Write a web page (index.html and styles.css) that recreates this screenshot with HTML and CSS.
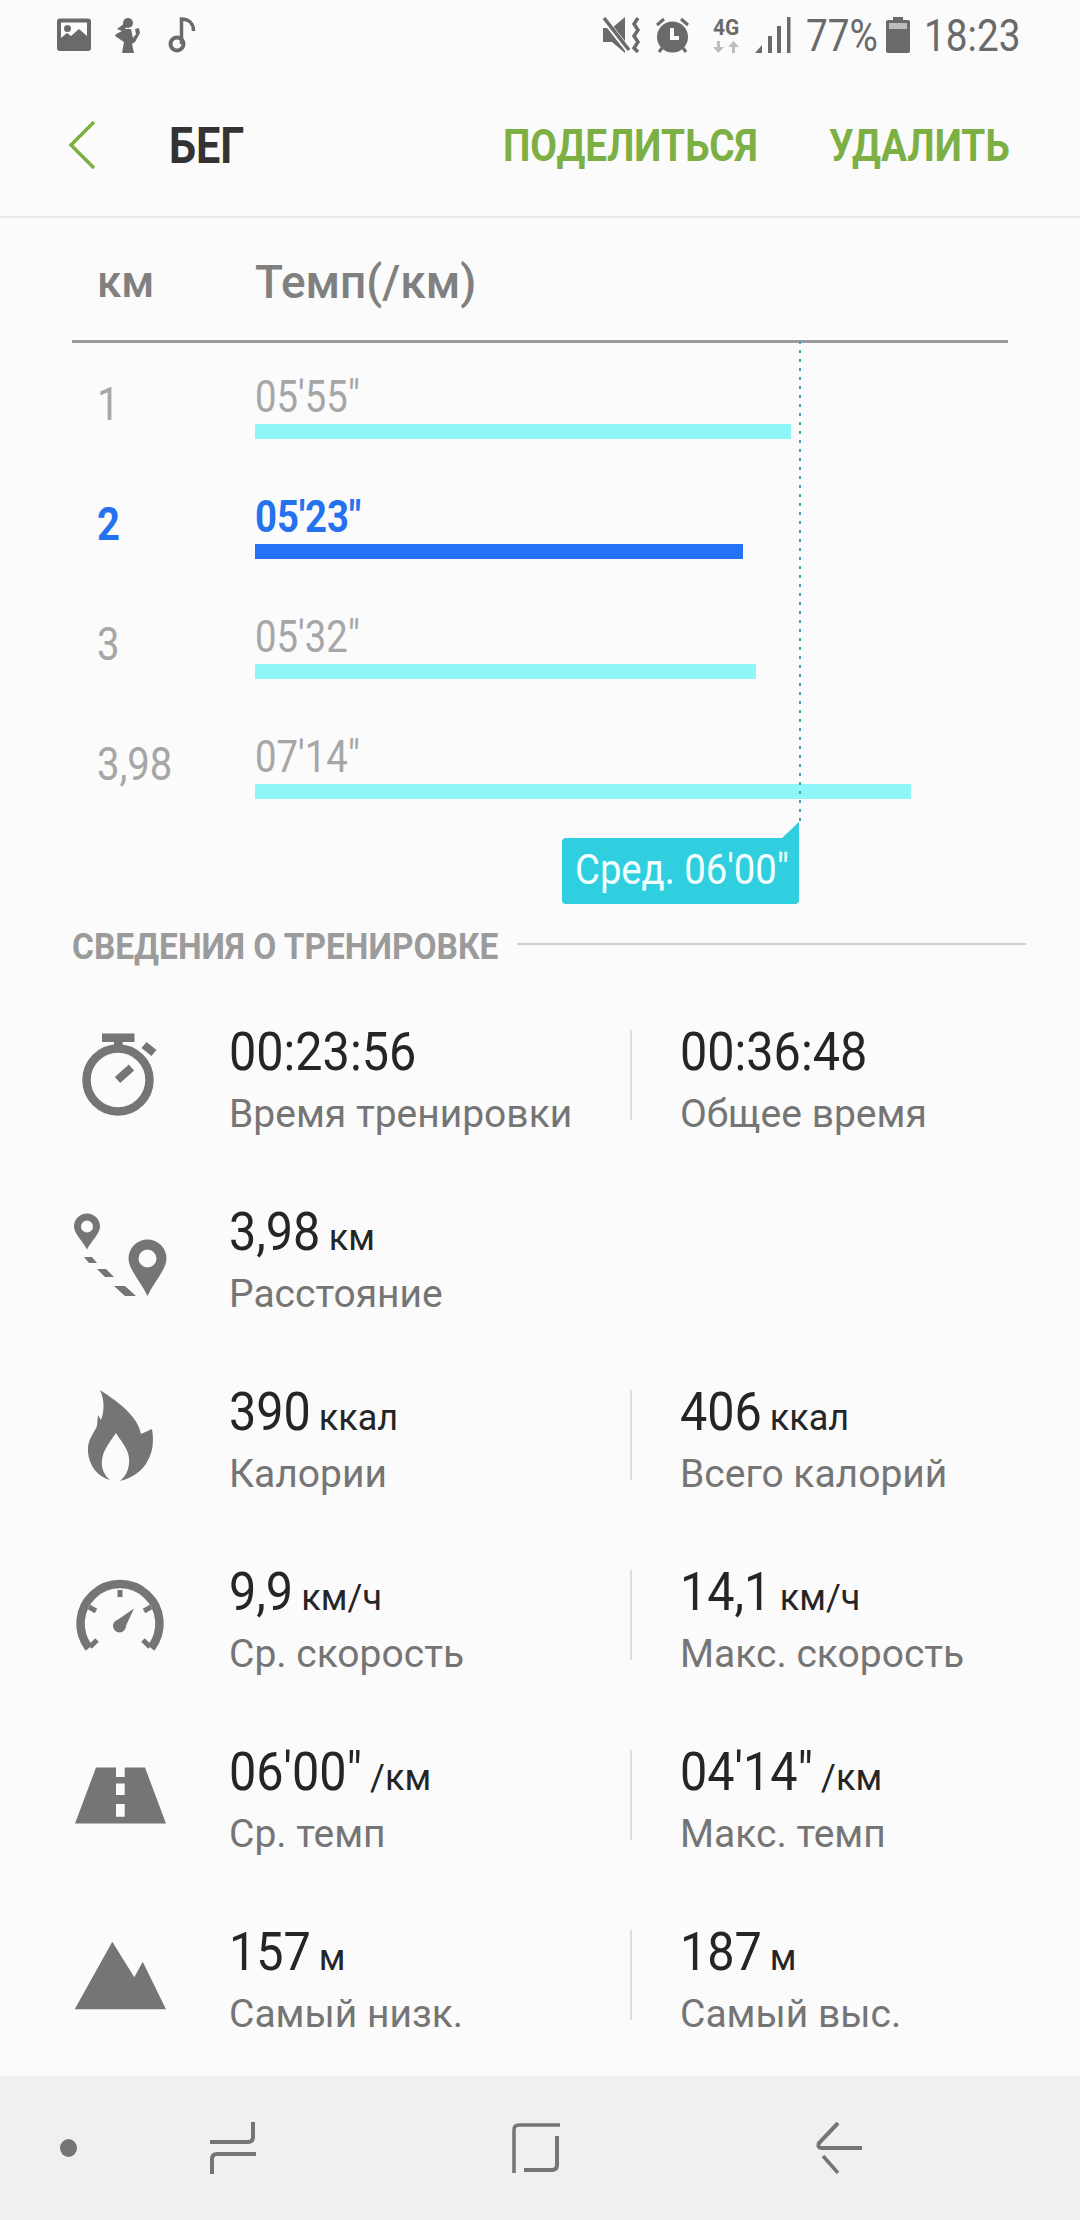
FILE: index.html
```html
<!DOCTYPE html>
<html lang="ru">
<head>
<meta charset="utf-8">
<title>Бег</title>
<link rel="stylesheet" href="styles.css">
</head>
<body>
<div class="screen">
  <div class="status">
    <svg class="si" width="34" height="36" viewBox="0 0 34 36"><path fill-rule="evenodd" d="M3 1.500H31a3 3 0 0 1 3 3V31a3 3 0 0 1-3 3H3a3 3 0 0 1-3-3V4.500a3 3 0 0 1 3-3zM4 5.500V21l6-5 4 3 8-7 8 7V5.500z"/><circle cx="10.500" cy="11.500" r="3.500"/></svg>
    <svg class="si gap-a" width="28" height="36" viewBox="0 0 28 36"><circle cx="14" cy="6" r="5"/><path d="M3 12l8-6 1 5-4 3z"/><path d="M9 12h8l2 9 3-4-1-5 4-1 1 5-5 9-3 2 2 9H8l2-11-9-6 1-2 6-3z"/></svg>
    <svg class="si gap-b" width="28" height="36" viewBox="0 0 28 36"><circle cx="9" cy="27" r="6.500" fill="none" stroke="#6a6a6a" stroke-width="4"/><path d="M13.500 27V2c8 0 12 5 12 12" fill="none" stroke="#6a6a6a" stroke-width="3.500"/></svg>
    <div class="status-right">
      <svg class="si" width="39" height="36" viewBox="0 0 39 36"><path d="M0 11h9L22 0v36L9 25H0z"/><path d="M0 1l26 33" stroke="#fbfbfb" stroke-width="6"/><path d="M1 1l25 32" stroke="#6a6a6a" stroke-width="3.500"/><path d="M35 1l-4 6 4 6-4 6 4 6-4 6 4 4" fill="none" stroke="#6a6a6a" stroke-width="3.500"/></svg>
      <svg class="si m13" width="35" height="36" viewBox="0 0 35 36"><circle cx="17.500" cy="20" r="15.500"/><path d="M2 8l7-6M33 8l-7-6M7 31l-3 4M28 31l3 4" stroke="#6a6a6a" stroke-width="3" fill="none"/><path d="M15 11v12h9v-4h-5v-8z" fill="#fbfbfb"/></svg>
      <div class="net">
        <span class="net-label"><span class="cond-4g">4G</span></span>
        <svg class="net-arrows" width="29" height="12" viewBox="0 0 29 12"><path d="M4 0h3v6h4l-5.500 6L0 6h4zM22 12h-3V6h-4l5.500-6L26 6h-4z"/></svg>
      </div>
      <svg class="si m13" width="36" height="36" viewBox="0 0 36 36"><path d="M0 36l7-8v8zM13 19h4v17h-4zM22 9h4v27h-4zM32 0h3.500v36H32z"/></svg>
      <span class="st-text st-pct"><span class="squeeze">77%</span></span>
      <svg class="si m10" width="24" height="36" viewBox="0 0 24 36"><path fill-rule="evenodd" d="M7 0h10v3h5a2 2 0 0 1 2 2v29a2 2 0 0 1-2 2H2a2 2 0 0 1-2-2V5a2 2 0 0 1 2-2h5z"/><rect x="3" y="6" width="18" height="6" fill="#bdbdbd"/></svg>
      <span class="st-text st-time"><span class="squeeze">18:23</span></span>
    </div>
  </div>

  <header class="bar">
    <svg class="back" width="27" height="48" viewBox="0 0 27 48"><path d="M26 1L3 24l23 23" fill="none" stroke="#7cb044" stroke-width="3.500"/></svg>
    <h1 class="title"><span class="t-title">БЕГ</span></h1>
    <a class="act act-share"><span class="t-share">ПОДЕЛИТЬСЯ</span></a>
    <a class="act"><span class="t-del">УДАЛИТЬ</span></a>
  </header>

  <section class="chart">
    <div class="chart-head">
      <span class="ch-km">км</span>
      <span class="ch-pace">Темп(/км)</span>
    </div>
    <div class="lap">
      <span class="lap-km"><span class="sq-lap">1</span></span>
      <div class="lap-main"><span class="lap-pace"><span class="sq-pace">05'55"</span></span><div class="lap-bar" style="width:536px"></div></div>
    </div>
    <div class="lap lap-on">
      <span class="lap-km"><span class="sq-lap">2</span></span>
      <div class="lap-main"><span class="lap-pace"><span class="sq-pace">05'23"</span></span><div class="lap-bar" style="width:488px"></div></div>
    </div>
    <div class="lap">
      <span class="lap-km"><span class="sq-lap">3</span></span>
      <div class="lap-main"><span class="lap-pace"><span class="sq-pace">05'32"</span></span><div class="lap-bar" style="width:501px"></div></div>
    </div>
    <div class="lap">
      <span class="lap-km"><span class="sq-lap">3,98</span></span>
      <div class="lap-main"><span class="lap-pace"><span class="sq-pace">07'14"</span></span><div class="lap-bar" style="width:656px"></div></div>
    </div>
    <div class="avg-line"></div>
    <div class="avg-tip"><span class="sq-tip">Сред. 06'00"</span></div>
  </section>

  <div class="section-title">
    <h2 class="sec-name"><span class="t-sec">СВЕДЕНИЯ О ТРЕНИРОВКЕ</span></h2>
    <div class="sec-rule"></div>
  </div>

  <section class="stats">
    <div class="stat-row">
      <svg class="ico" width="100" height="100" viewBox="0 0 100 100"><circle cx="46" cy="50" r="31.500" fill="none" stroke="#757575" stroke-width="8.500"/><path d="M30 3.500h32.500v8.500H50.700v9H42v-9H30z"/><path d="M72 15l10 8M45.500 50l14-12.500" stroke="#757575" stroke-width="8" fill="none"/></svg>
      <div class="stat"><div class="val"><span class="num">00:23:56</span></div><div class="lbl">Время тренировки</div></div>
      <div class="vr"></div>
      <div class="stat"><div class="val"><span class="num">00:36:48</span></div><div class="lbl">Общее время</div></div>
    </div>
    <div class="stat-row">
      <svg class="ico" width="100" height="100" viewBox="0 0 100 100"><path fill-rule="evenodd" d="M15 3.500a13 13 0 0 1 13 13c0 7-9 15-13 23-4-8-13-16-13-23a13 13 0 0 1 13-13zM15 10.500a6 6 0 1 0 0 12 6 6 0 0 0 0-12z"/><path fill-rule="evenodd" d="M75.500 29.500a19 19 0 0 1 19 19c0 11-13 24-19 37.500-6-13.500-19-26.500-19-37.500a19 19 0 0 1 19-19zM75.500 39.500a9 9 0 1 0 0 18 9 9 0 0 0 0-18z"/><path d="M12 47h8l5 6h-8zM25 59h9l8 8h-9zM42 76h11l11 10H53z"/></svg>
      <div class="stat"><div class="val"><span class="num">3,98</span><span class="unit"><span class="unfold">км</span></span></div><div class="lbl">Расстояние</div></div>
    </div>
    <div class="stat-row">
      <svg class="ico" width="100" height="100" viewBox="0 0 100 100"><path d="M28 0C50 14 66 28 69 44l11-5c2 11 1 23-4 31-5 11-16 18-28 21 6-5 10-13 9-23-1-10-9-18-13-25-6 9-13 17-14 27-1 8 2 15 8 20-12-3-21-14-22-28-1-12 6-19 9-26l1-11 3 5c4-10 3-22-1-30z"/></svg>
      <div class="stat"><div class="val"><span class="num">390</span><span class="unit"><span class="unfold">ккал</span></span></div><div class="lbl">Калории</div></div>
      <div class="vr"></div>
      <div class="stat"><div class="val"><span class="num">406</span><span class="unit"><span class="unfold">ккал</span></span></div><div class="lbl">Всего калорий</div></div>
    </div>
    <div class="stat-row">
      <svg class="ico" width="100" height="100" viewBox="0 0 100 100"><path d="M17 78A39.500 39.500 0 1 1 79 78" fill="none" stroke="#757575" stroke-width="8.500"/><path d="M48 20v7M17 37l7 4M79 37l-7 4M18 77l7-7M78 77l-7-7" stroke="#757575" stroke-width="5" fill="none"/><circle cx="47.500" cy="56" r="6.500"/><path d="M42.500 52L62 38.500 52 60z"/></svg>
      <div class="stat"><div class="val"><span class="num">9,9</span><span class="unit"><span class="unfold">км/ч</span></span></div><div class="lbl">Ср. скорость</div></div>
      <div class="vr"></div>
      <div class="stat"><div class="val"><span class="num">14,1</span><span class="unit"><span class="unfold">км/ч</span></span></div><div class="lbl">Макс. скорость</div></div>
    </div>
    <div class="stat-row">
      <svg class="ico" width="100" height="100" viewBox="0 0 100 100"><path fill-rule="evenodd" d="M24 17.500h20v9.500h8.700v-9.500H73l21 56H3zM44 33.500V45h8.700V33.500zM44 54v12.700h8.700V54z"/></svg>
      <div class="stat"><div class="val"><span class="num">06'00"</span><span class="unit"><span class="unfold">/км</span></span></div><div class="lbl">Ср. темп</div></div>
      <div class="vr"></div>
      <div class="stat"><div class="val"><span class="num">04'14"</span><span class="unit"><span class="unfold">/км</span></span></div><div class="lbl">Макс. темп</div></div>
    </div>
    <div class="stat-row">
      <svg class="ico" width="100" height="100" viewBox="0 0 100 100"><path d="M40.300 11.700L62.300 47.300 70.700 31.700 94 79.300H2.700z"/></svg>
      <div class="stat"><div class="val"><span class="num">157</span><span class="unit"><span class="unfold">м</span></span></div><div class="lbl">Самый низк.</div></div>
      <div class="vr"></div>
      <div class="stat"><div class="val"><span class="num">187</span><span class="unit"><span class="unfold">м</span></span></div><div class="lbl">Самый выс.</div></div>
    </div>
  </section>

  <nav class="nav">
    <span class="nav-dot"></span>
    <svg class="nav-recent" width="46" height="52" viewBox="0 0 46 52"><path d="M0 20H38Q43 20 43 15V0" fill="none" stroke="#757575" stroke-width="4"/><path d="M46 32H7Q2 32 2 37V52" fill="none" stroke="#757575" stroke-width="4"/></svg>
    <svg class="nav-home" width="48" height="50" viewBox="0 0 48 50"><path d="M48 2H7Q2 2 2 7V50" fill="none" stroke="#757575" stroke-width="3.500"/><path d="M45 13V42Q45 47 40 47H12" fill="none" stroke="#757575" stroke-width="4"/></svg>
    <svg class="nav-backi" width="46" height="52" viewBox="0 0 46 52"><path d="M22 1L3 21Q1 26 6 26H46" fill="none" stroke="#757575" stroke-width="4"/><path d="M7 34L22 51" fill="none" stroke="#757575" stroke-width="3.500"/></svg>
  </nav>
</div>
</body>
</html>
```
FILE: styles.css
```css
* { box-sizing: border-box; }
html, body { margin: 0; padding: 0; }
body { font-family: Roboto, "Noto Sans", sans-serif; background: #fbfbfb; }
.screen { width: 1080px; height: 2220px; overflow: hidden; background: #fbfbfb; display: flex; flex-direction: column; }

/* status bar */
.status { height: 70px; padding: 17px 61px 0 57px; display: flex; align-items: flex-start; flex: none; }
.si { fill: #6a6a6a; flex: none; display: block; }
.gap-a { margin-left: 23px; }
.gap-b { margin-left: 26px; }
.status-right { margin-left: auto; display: flex; align-items: flex-start; }
.m13 { margin-left: 13px; }
.m10 { margin-left: 10px; }
.net { width: 29px; margin-left: 23px; height: 36px; display: flex; flex-direction: column; }
.net-label { display: block; height: 22px; font-size: 22px; line-height: 22px; font-weight: 700; color: #6a6a6a; white-space: nowrap; }
.cond-4g { display: inline-block; transform: scaleX(.95); transform-origin: left; }
.net-arrows { fill: #bdbdbd; margin-top: 2px; display: block; }
.st-text { font-size: 44px; line-height: 38px; color: #6a6a6a; white-space: nowrap; display: block; }
.squeeze { display: inline-block; transform: scaleX(.88); transform-origin: left; }
.st-pct { width: 70px; margin-left: 15px; }
.st-time { width: 95px; margin-left: 14px; }

/* app bar */
.bar { height: 148px; flex: none; border-bottom: 2px solid #e9e9e9; display: flex; align-items: center; padding: 5px 0 0 68px; }
.back { flex: none; margin-top: -2px; }
.title { margin: 0 0 0 74px; width: 334px; font-size: 50px; line-height: 56px; font-weight: 700; color: #333; white-space: nowrap; }
.t-title { display: inline-block; transform: scaleX(.864); transform-origin: left; }
.act { font-size: 45px; line-height: 56px; font-weight: 700; color: #7cb044; white-space: nowrap; }
.act-share { width: 326px; }
.t-share, .t-del { display: inline-block; transform: scaleX(.86); transform-origin: left; }

/* chart */
.chart { position: relative; height: 706px; flex: none; }
.chart-head { height: 125px; margin: 0 72px; padding-left: 25px; border-bottom: 3px solid #9b9b9b; display: flex; align-items: flex-start; padding-top: 39px; color: #808080; font-size: 44px; line-height: 50px; font-weight: 500; }
.ch-km { width: 158px; }
.ch-pace { font-size: 46px; }
.lap { height: 120px; padding-left: 97px; display: flex; color: #a6a6a6; }
.lap-km { width: 158px; flex: none; padding-top: 36px; font-size: 46px; line-height: 50px; white-space: nowrap; }
.sq-lap { display: inline-block; transform: scaleX(.87); transform-origin: left; }
.lap-main { padding-top: 29px; flex: 1; }
.lap-pace { display: block; font-size: 44px; line-height: 50px; white-space: nowrap; }
.sq-pace { display: inline-block; transform: scaleX(.87); transform-origin: left; }
.lap-bar { height: 15px; margin-top: 2px; background: #8ff7fa; }
.lap-on { color: #2472f0; font-weight: 700; }
.lap-on .lap-bar { background: #2472f5; }
.avg-line { position: absolute; left: 799px; top: 123px; width: 2px; height: 482px; background: repeating-linear-gradient(#3aa5b0 0 3px, transparent 3px 9px); }
.avg-tip { position: absolute; left: 562px; top: 620px; width: 237px; height: 66px; border-radius: 4px 0 4px 4px; background: #30cfe0; color: #f4ffff; font-size: 42px; line-height: 64px; padding-left: 13px; white-space: nowrap; }
.avg-tip::before { content: ""; position: absolute; right: 0; top: -16px; width: 17px; height: 16px; background: #30cfe0; clip-path: polygon(100% 0, 100% 100%, 0 100%); }
.sq-tip { display: inline-block; transform: scaleX(.91); transform-origin: left; }

/* section title */
.section-title { height: 50px; flex: none; margin-top: -2px; padding-left: 72px; padding-right: 54px; display: flex; align-items: center; }
.sec-name { margin: 0; width: 445px; flex: none; font-size: 36px; line-height: 50px; font-weight: 700; color: #9b9b9b; white-space: nowrap; }
.t-sec { display: inline-block; transform: scaleX(.93); transform-origin: left; }
.sec-rule { flex: 1; height: 2px; background: #d0d0d0; margin-top: -6px; }

/* stats */
.stats { flex: none; margin-top: 13px; }
.stat-row { height: 180px; padding: 45px 0 0 72px; display: flex; align-items: flex-start; }
.ico { width: 100px; height: 100px; flex: none; margin-right: 57px; fill: #757575; }
.stat { width: 401px; }
.stat-row .vr + .stat { width: 340px; }
.val { height: 44px; font-size: 53px; line-height: 44px; color: #252525; white-space: nowrap; transform: scaleX(.916); transform-origin: left; }
.unit { display: inline-block; margin-left: 9px; font-size: 36px; }
.unfold { display: inline-block; transform: scaleX(1.092); transform-origin: left; }
.lbl { margin-top: 18px; font-size: 39px; line-height: 44px; color: #757575; white-space: nowrap; }
.vr { width: 2px; height: 90px; flex: none; background: #dedede; margin-right: 48px; }

/* nav */
.nav { position: relative; height: 144px; margin-top: auto; flex: none; background: #f0f0f0; display: flex; align-items: center; }
.nav-dot { width: 17px; height: 18px; border-radius: 50%; background: #757575; margin-left: 60px; flex: none; }
.nav-recent { margin-left: 133px; flex: none; }
.nav-home { margin-left: 256px; flex: none; }
.nav-backi { margin-left: 256px; flex: none; }
```
